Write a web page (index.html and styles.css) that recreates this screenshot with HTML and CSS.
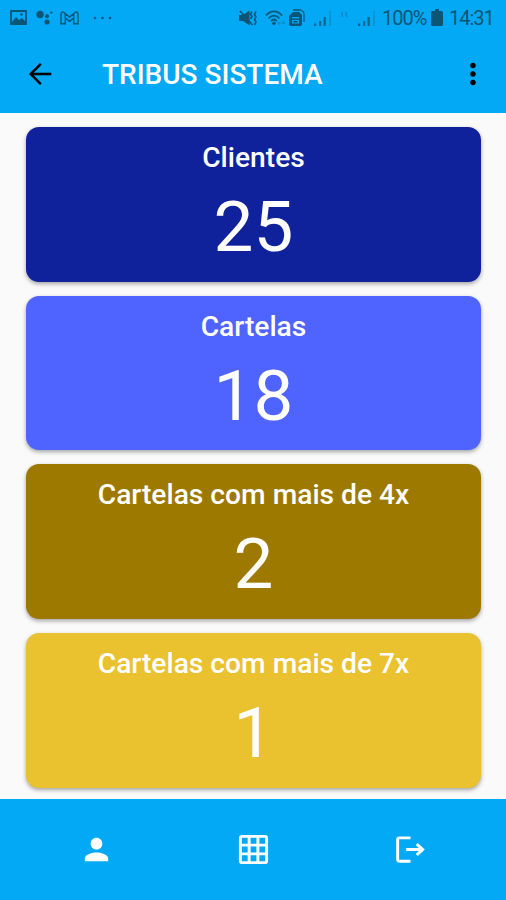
FILE: index.html
```html
<!DOCTYPE html>
<html lang="pt-BR">
<head>
    <meta charset="UTF-8">
    <meta name="viewport" content="width=device-width, initial-scale=1.0">
    <title>Tribus Sistema</title>
    <link rel="stylesheet" href="styles.css">
</head>
<body>
    <div class="app">
        <header class="header">
            <div class="status-bar">
                <div class="status-left">
                    <svg width="17" height="15" viewBox="0 0 17 15"><path fill="none" stroke="currentColor" stroke-width="1.8" d="M1 1h15v13H1z"/><path fill="currentColor" d="M2 12l4-5 3 3 3-2 4 4v2H2z"/><circle cx="11.5" cy="4.5" r="1.2" fill="currentColor"/></svg>
                    <svg class="icon-assistant" width="17" height="15" viewBox="0 0 17 15" fill="currentColor"><circle cx="4" cy="4.5" r="3.7"/><circle cx="11" cy="6.2" r="2"/><circle cx="15.3" cy="2.6" r="1.1"/><circle cx="11" cy="12" r="2.6"/></svg>
                    <svg class="icon-mail" width="19" height="14" viewBox="0 0 19 14" fill="none" stroke="currentColor" stroke-width="1.4"><path d="M1 12.8V2.5Q2 .2 4 1.5l5.500 4.500L15 1.500Q17 .2 18 2.500v10.300h-4.300V7l-4.200 3.300L5.300 7v5.800zM5.300 7V3M13.700 7V3"/></svg>
                    <svg class="icon-more" width="19" height="4" viewBox="0 0 19 4" fill="currentColor"><circle cx="2" cy="2" r="1.3"/><circle cx="9.500" cy="2" r="1.3"/><circle cx="17" cy="2" r="1.3"/></svg>
                </div>
                <div class="status-right">
                    <svg width="19" height="16" viewBox="0 0 19 16"><path fill="currentColor" d="M0 5h4l6.500-4.500v15L4 11H0z"/><path fill="none" stroke="currentColor" stroke-width="1.600" d="M1 1l12.500 14M13 1.500L11.500 4 13 6.500 11.500 9M17 1.500L15.500 4.500 17 7l-1.500 2.500L17 12l-1.500 3"/></svg>
                    <svg class="icon-wifi" width="21" height="16" viewBox="0 0 21 16"><g fill="none" stroke="currentColor" stroke-width="1.700"><path d="M.8 5.500Q9 -2.800 17.200 5.500M3.500 8.300Q9 3 14.500 8.300M6 11Q9 8 12 11"/></g><circle cx="9" cy="13.300" r="1.700" fill="currentColor"/><path fill="currentColor" opacity=".3" d="M12 12h4l-2 3.500zM16.500 14l2-4 2 4z"/></svg>
                    <svg class="icon-sim" width="16" height="17" viewBox="0 0 16 17"><path fill="none" stroke="currentColor" stroke-width="1.300" d="M4 1h7.500Q15 2 15 5.500V13"/><path fill="currentColor" fill-rule="evenodd" d="M4 3h6l3 3v9q0 2-2 2H2q-2 0-2-2V7zM3 8v1.500h7V8zM3 11v3.500h7V11zM4.300 12h4.400v1.400H4.300z"/></svg>
                    <svg class="icon-signal" width="18" height="16" viewBox="0 0 18 16" fill="currentColor"><path opacity=".8" d="M0 13.500h2.200V16H0zM5.200 11h2v5h-2zM9.600 7h2.200v9H9.600z"/><path opacity=".3" d="M15.400 1h1.500v15h-1.500z"/></svg>
                    <svg class="icon-data" width="7" height="6" viewBox="0 0 7 6" fill="currentColor"><path opacity=".4" d="M0 0h1.800L2 5H1zM4.200 0H6l.2 5h-1z"/></svg>
                    <svg class="icon-signal-two" width="18" height="16" viewBox="0 0 18 16" fill="currentColor"><path opacity=".8" d="M0 13.500h2.200V16H0zM5.200 11h2v5h-2zM9.600 7h2.200v9H9.600z"/><path opacity=".3" d="M15.400 1h1.500v15h-1.500z"/></svg>
                    <span class="battery-level">100%</span>
                    <svg class="icon-battery" width="12" height="17" viewBox="0 0 12 17" fill="currentColor"><path d="M4 0h4v2h2.500Q12 2 12 3.500v12q0 1.500-1.500 1.500h-9Q0 17 0 15.500v-12Q0 2 1.500 2H4z"/></svg>
                    <span class="clock">14:31</span>
                </div>
            </div>
            <div class="toolbar">
                <svg class="back" width="34" height="34" viewBox="0 0 24 24" fill="#000"><path d="M20 11.200H7.500l5.700-5.800L12 4.200 4.200 12l7.800 7.800 1.200-1.200-5.700-5.800H20z"/></svg>
                <h1 class="title">TRIBUS SISTEMA</h1>
                <svg class="menu" width="34" height="34" viewBox="0 0 24 24" fill="#000"><path d="M12 8c1.100 0 2-.9 2-2s-.9-2-2-2-2 .9-2 2 .9 2 2 2zm0 2c-1.100 0-2 .9-2 2s.9 2 2 2 2-.9 2-2-.9-2-2-2zm0 6c-1.100 0-2 .9-2 2s.9 2 2 2 2-.9 2-2-.9-2-2-2z"/></svg>
            </div>
        </header>

        <main class="cards">
            <div class="card card-clientes">
                <h2 class="card-title">Clientes</h2>
                <div class="card-value">25</div>
            </div>
            <div class="card card-cartelas">
                <h2 class="card-title">Cartelas</h2>
                <div class="card-value">18</div>
            </div>
            <div class="card card-4x">
                <h2 class="card-title">Cartelas com mais de 4x</h2>
                <div class="card-value">2</div>
            </div>
            <div class="card card-7x">
                <h2 class="card-title">Cartelas com mais de 7x</h2>
                <div class="card-value">1</div>
            </div>
        </main>

        <nav class="bottom-nav">
            <svg width="35" height="35" viewBox="0 0 24 24" fill="#fff"><path d="M12 12c2.210 0 4-1.790 4-4s-1.790-4-4-4-4 1.790-4 4 1.790 4 4 4zm0 2c-2.670 0-8 1.340-8 4v2h16v-2c0-2.660-5.330-4-8-4z"/></svg>
            <svg width="35" height="35" viewBox="0 0 24 24" fill="#fff"><path d="M20 2H4c-1.100 0-2 .9-2 2v16c0 1.100.9 2 2 2h16c1.100 0 2-.9 2-2V4c0-1.100-.9-2-2-2zM8 20H4v-4h4v4zm0-6H4v-4h4v4zm0-6H4V4h4v4zm6 12h-4v-4h4v4zm0-6h-4v-4h4v4zm0-6h-4V4h4v4zm6 12h-4v-4h4v4zm0-6h-4v-4h4v4zm0-6h-4V4h4v4z"/></svg>
            <svg width="35" height="35" viewBox="0 0 24 24" fill="#fff"><path d="M17 7.500l-1.410 1.410L17.700 11H9v2h8.700l-2.110 2.090L17 16.500l4.800-4.500zM4.500 5H12V3H4.500c-1.400 0-2.300.9-2.300 2v14c0 1.100.9 2 2.300 2H12v-2H4.200V5z"/></svg>
        </nav>
    </div>
</body>
</html>
```
FILE: styles.css
```css
body {
    margin: 0;
    font-family: Roboto, sans-serif;
    background: #fafafa;
}

svg {
    display: block;
    flex-shrink: 0;
}

.app {
    display: flex;
    flex-direction: column;
    height: 900px;
    overflow: hidden;
}

.header {
    height: 113px;
    background: #03a9f4;
    flex-shrink: 0;
}

.status-bar {
    display: flex;
    justify-content: space-between;
    height: 35px;
    padding: 0 11px 0 10px;
    color: #0d5575;
}

.status-left,
.status-right {
    display: flex;
    align-items: center;
}

.icon-assistant {
    margin-left: 9px;
}

.icon-mail {
    margin-left: 7px;
}

.icon-more {
    margin-left: 14px;
}

.icon-wifi {
    margin-left: 7px;
}

.icon-sim {
    margin-left: 3px;
}

.icon-signal {
    margin-left: 9px;
}

.icon-data {
    margin: 0 10px 6px 9px;
}

.battery-level,
.clock {
    padding-top: 1px;
    font-size: 20px;
    letter-spacing: -1px;
}

.battery-level {
    width: 45px;
    margin-left: 6px;
}

.icon-battery {
    margin-left: 4px;
}

.clock {
    width: 46px;
    margin-left: 6px;
}

.toolbar {
    display: flex;
    align-items: center;
    height: 78px;
    padding: 0 16px 0 23px;
}

.title {
    flex: 1;
    margin: 0 0 0 45px;
    font-size: 28px;
    font-weight: 500;
    color: #fff;
    white-space: nowrap;
}

.cards {
    flex: 1;
    display: flex;
    flex-direction: column;
    gap: 14px;
    padding: 14px 25px 0 26px;
}

.card {
    height: 154.7px;
    flex-shrink: 0;
    border-radius: 13px;
    color: #fff;
    text-align: center;
    box-shadow: 0 2px 4px rgba(0, 0, 0, 0.35);
}

.card-clientes {
    background: #0f229b;
}

.card-cartelas {
    background: #4f64ff;
}

.card-4x {
    background: #9d7900;
}

.card-7x {
    background: #eac12f;
}

.card-title {
    margin: 0;
    padding-top: 14px;
    font-size: 28.2px;
    line-height: 33px;
    font-weight: 500;
}

.card-value {
    margin-top: 11px;
    font-size: 71px;
    line-height: 83px;
}

.bottom-nav {
    display: flex;
    justify-content: space-between;
    align-items: center;
    height: 101px;
    flex-shrink: 0;
    padding: 0 78px 0 79px;
    background: #03a9f4;
}
```
